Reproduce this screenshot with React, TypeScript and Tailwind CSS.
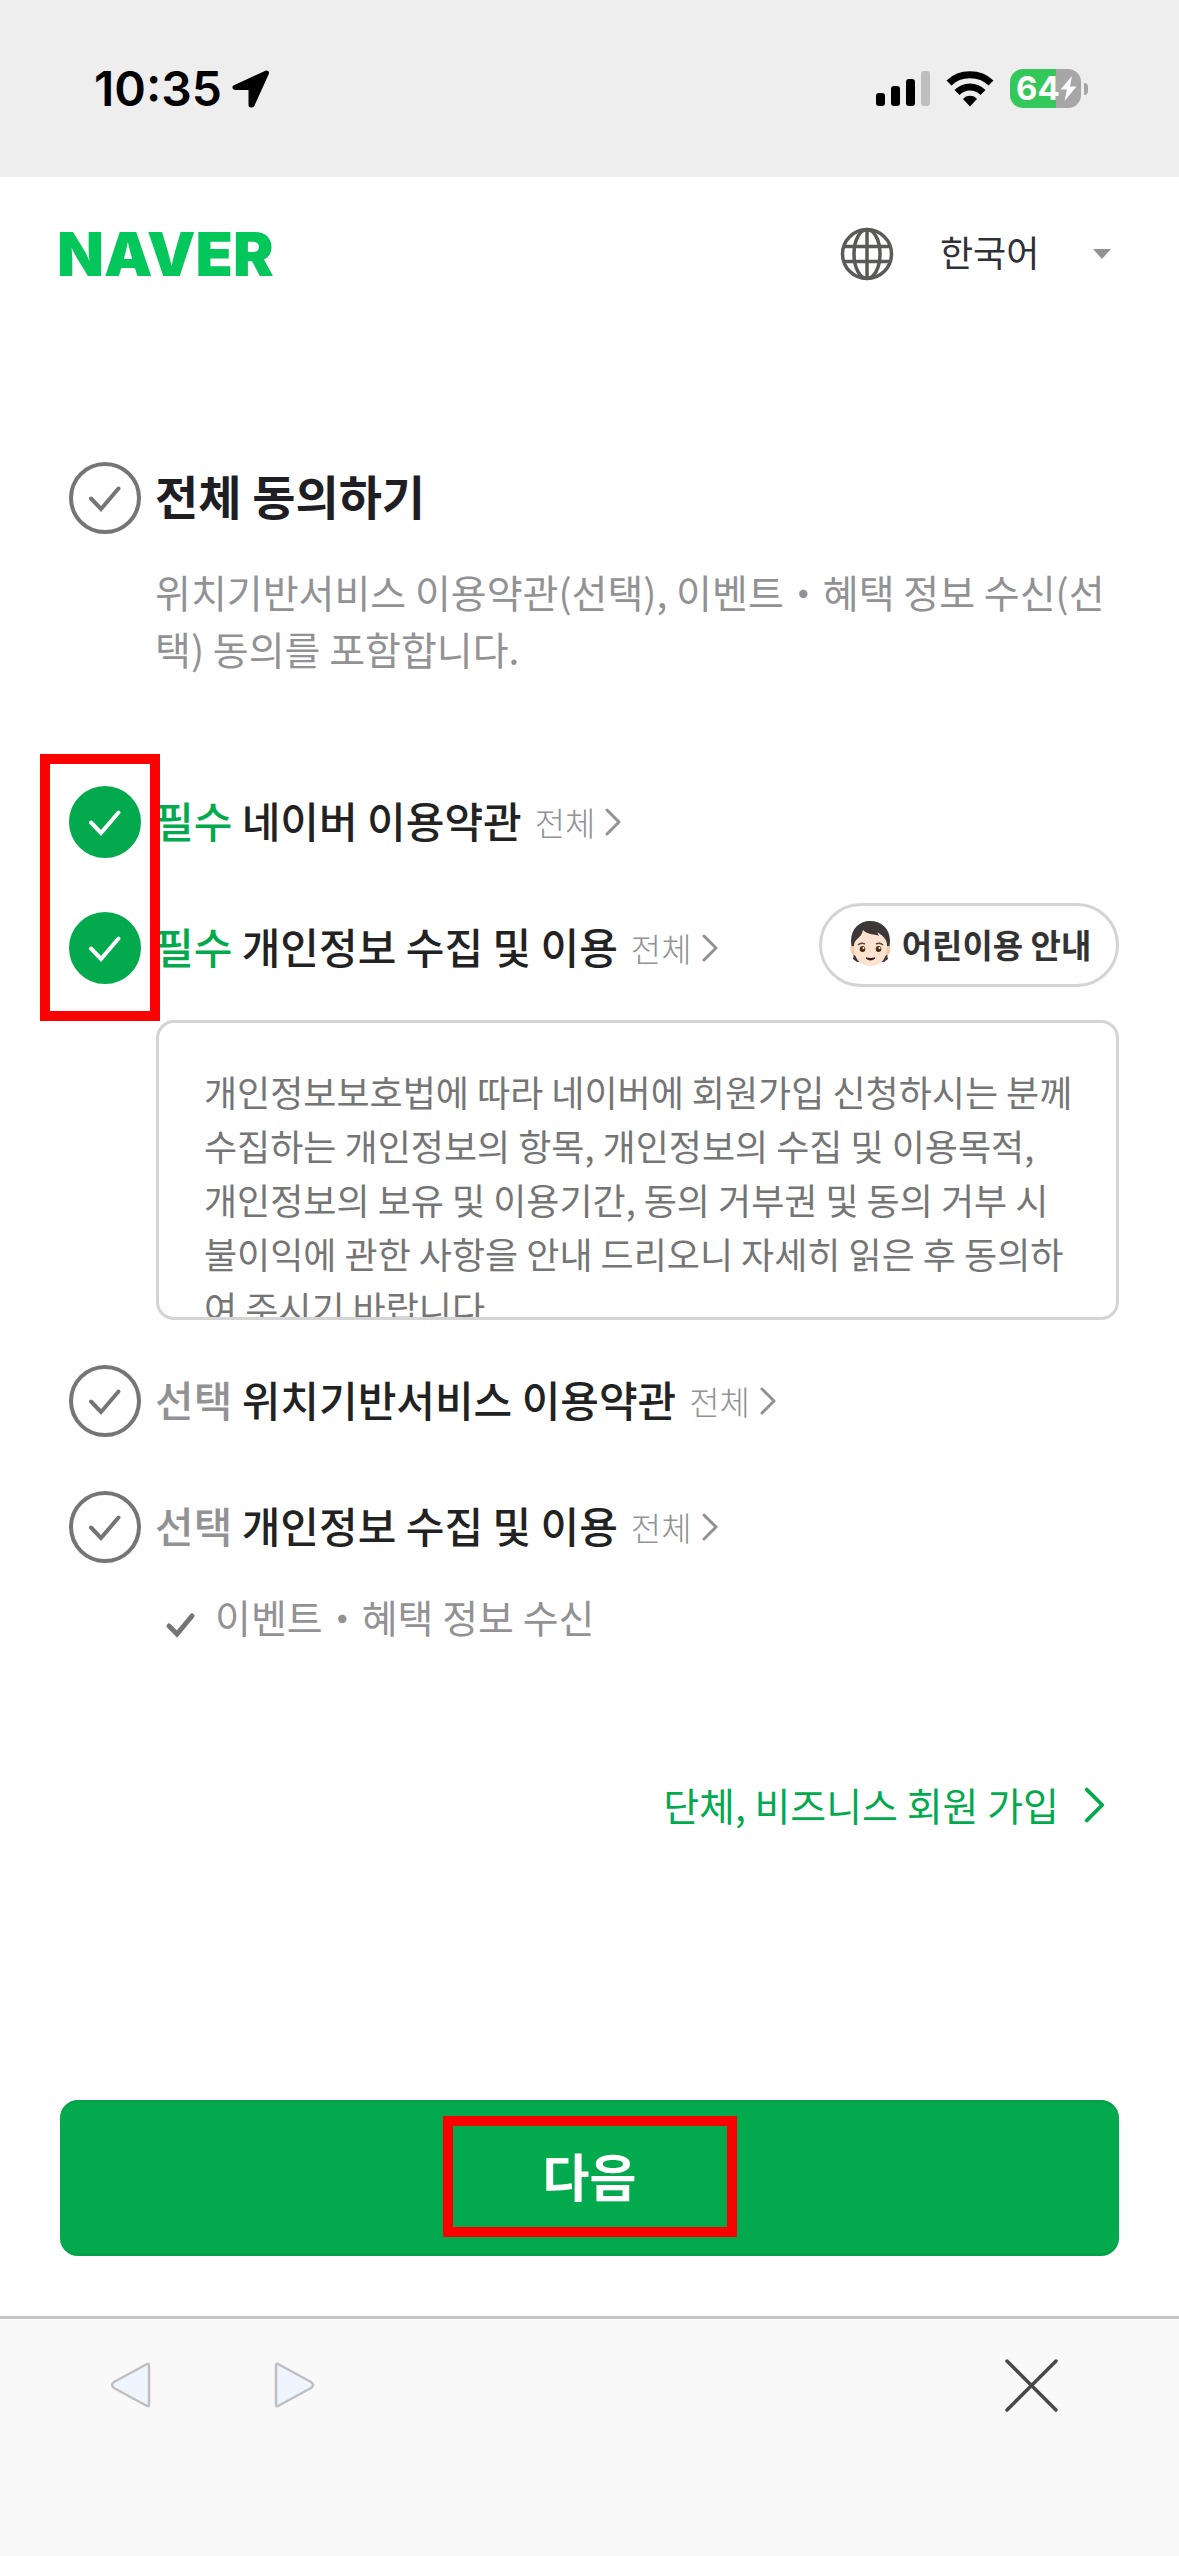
import type { ReactNode } from "react";

const kr = "font-['Noto_Sans_CJK_KR','Noto_Sans',sans-serif]";

function StatusBar() {
  return (
    <header className="flex h-[177px] items-center justify-between bg-[#eeeeee] pr-[91px] pl-[94px] font-['Inter',sans-serif]">
      <div className="flex items-center gap-[10px]">
        <time className="text-[48px] leading-[54px] font-semibold text-black">10:35</time>
        <svg width="38" height="38" viewBox="0 0 38 38" aria-hidden="true">
          <path
            d="M34.5 3 L3 17.5 H19 V35 H20 L34.5 3Z"
            fill="#000"
            stroke="#000"
            strokeWidth="5"
            strokeLinejoin="round"
          />
        </svg>
      </div>
      <div className="flex items-center gap-[16px]">
        <svg width="54" height="35" viewBox="0 0 54 35" aria-hidden="true">
          <rect x="0" y="22" width="9" height="13" rx="3" />
          <rect x="15" y="15" width="9" height="20" rx="3" />
          <rect x="30" y="8" width="9" height="27" rx="3" />
          <rect x="45" y="0" width="9" height="35" rx="3" fill="#bebebe" />
        </svg>
        <svg width="48" height="36" viewBox="0 0 48 36" aria-hidden="true">
          <path d="M3 12 C14 1 34 1 45 12" fill="none" stroke="#000" strokeWidth="7" />
          <path d="M11 21.5 C18 14 30 14 37 21.5" fill="none" stroke="#000" strokeWidth="7" />
          <path d="M24 35.5 L17 28 C20 23.5 28 23.5 31 28Z" />
        </svg>
        <div className="flex items-center gap-[3px]">
          <div className="flex h-[39px] w-[71px] items-center rounded-[13px] bg-[linear-gradient(90deg,#34c759_65%,#a6a6a6_65%)] pl-[6px] text-white">
            <span className="text-[33px] leading-[39px] font-bold">64</span>
            <svg width="17" height="25" viewBox="0 0 17 25" aria-hidden="true">
              <path d="M12 0 L0.5 13.5 H7 L4.5 25 L16.5 10.5 H10Z" fill="#fff" />
            </svg>
          </div>
          <span className="h-[12px] w-[4px] rounded-r-full bg-[#a6a6a6]" />
        </div>
      </div>
    </header>
  );
}

function TopBar() {
  return (
    <div className="flex h-[154px] items-center justify-between pr-[68px] pl-[57px]">
      <a href="#naver" className="font-['Inter',sans-serif] text-[61px] leading-[72px] font-black text-[#03c75a]">
        NAVER
      </a>
      <div className="flex items-center">
        <svg width="54" height="54" viewBox="0 0 54 54" fill="none" stroke="#5a5a57" strokeWidth="3.5" aria-hidden="true">
          <circle cx="27" cy="27" r="24.5" />
          <ellipse cx="27" cy="27" rx="13" ry="24.5" />
          <path d="M27 2.5 V51.5 M4 19.5 H50 M4 34.5 H50" />
        </svg>
        <div className="relative flex items-center">
          <select
            aria-label="언어"
            className="h-[60px] w-[217px] appearance-none bg-transparent pb-[6px] pl-[46px] text-[36px] leading-[54px] text-[#303038]"
          >
            <option>한국어</option>
          </select>
          <svg className="pointer-events-none absolute right-0" width="18" height="10" viewBox="0 0 18 10" aria-hidden="true">
            <path d="M0 0 H18 L9 10Z" fill="#929294" />
          </svg>
        </div>
      </div>
    </div>
  );
}

function CheckCircle({ id, checked = false }: { id: string; checked?: boolean }) {
  return (
    <span className="relative flex size-[72px] shrink-0">
      <input id={id} type="checkbox" defaultChecked={checked} className="peer absolute inset-0 size-full appearance-none" />
      <svg
        className="pointer-events-none size-full fill-none stroke-[#757575] peer-checked:fill-[#03aa4d] peer-checked:stroke-[#03aa4d]"
        viewBox="0 0 72 72"
        aria-hidden="true"
      >
        <circle cx="36" cy="36" r="34" strokeWidth="4" />
        <path
          d="M22 36.5 L32 47 L49.5 26.5"
          fill="none"
          stroke={checked ? "#ffffff" : "#757575"}
          strokeWidth="4"
          strokeLinecap="round"
        />
      </svg>
    </span>
  );
}

function Chevron({ className }: { className: string }) {
  return (
    <svg className={className} viewBox="0 0 16 28" fill="none" stroke="currentColor" strokeWidth="3" aria-hidden="true">
      <path d="M2 2 L14 14 L2 26" strokeLinecap="round" strokeLinejoin="round" />
    </svg>
  );
}

function Term({
  id,
  kind,
  title,
  checked,
  children,
}: {
  id: string;
  kind: "필수" | "선택";
  title: string;
  checked?: boolean;
  children?: ReactNode;
}) {
  const kindColor = kind === "필수" ? "text-[#03aa4d]" : "text-[#929294]";
  return (
    <div className="flex h-[84px] items-center">
      <CheckCircle id={id} checked={checked} />
      <label htmlFor={id} className="ml-[14px] pb-1 text-[42px] leading-[60px] font-medium whitespace-nowrap text-[#222222]">
        <span className={kindColor}>{kind}</span> {title}
      </label>
      <a href={`#${id}`} className="ml-[13px] flex items-center gap-[10px] text-[33px] leading-[46px] font-light whitespace-nowrap text-[#929294]">
        전체
        <Chevron className="h-[28px] w-[16px]" />
      </a>
      {children}
    </div>
  );
}

function ChildFace() {
  return (
    <svg width="42" height="46" viewBox="0 0 42 46" aria-hidden="true">
      <path
        d="M3 38 C5 33 1 28 1 20 C1 7 10 0 20 0 C31 0 40 7 40 20 C40 28 36 33 38 38 L34 41 H7Z"
        fill="#3d3738"
      />
      <path d="M2 25 Q-1 28 2 33 L6 35 V25Z" fill="#f5cba8" />
      <path d="M39 25 Q42 28 39 33 L35 35 V25Z" fill="#f5cba8" />
      <path
        d="M4 24 C5 17 11 18 13 9 C17 14 26 13 29 15 C28 13 28 12 27 11 C32 14 37 18 37 24 C38 37 31 45 20.500 45 C10 45 3 37 4 24Z"
        fill="#fce3d0"
      />
      <path d="M8 24 Q11 21 15 23 M26 23 Q30 21 33 24" fill="none" stroke="#5a4a42" strokeWidth="1.5" />
      <ellipse cx="12.500" cy="28" rx="2.800" ry="3" fill="#4a3010" />
      <ellipse cx="28.500" cy="28" rx="2.800" ry="3" fill="#4a3010" />
      <circle cx="13.500" cy="27" r="1" fill="#ffffff" />
      <circle cx="29.500" cy="27" r="1" fill="#ffffff" />
      <path d="M16 37 Q20.500 38 25 37 Q20.500 41 16 37Z" fill="#2a1414" stroke="#2a1414" strokeWidth="1" />
    </svg>
  );
}

export default function App() {
  return (
    <div className={`flex min-h-screen flex-col bg-white ${kr}`}>
      <StatusBar />
      <TopBar />

      <main className="flex flex-1 flex-col px-[60px] pt-[125px]">
        <form className="pl-[9px]">
          <section className="pb-[103px]">
            <div className="flex h-[84px] items-center">
              <CheckCircle id="all" />
              <label htmlFor="all" className="ml-[14px] pb-2 text-[47px] leading-[69px] font-bold text-[#1e1e23]">
                전체 동의하기
              </label>
            </div>
            <p className="mt-[23px] ml-[86px] text-[39px] leading-[57px] text-[#929294]">
              위치기반서비스 이용약관(선택), 이벤트・혜택 정보 수신(선
              <br />
              택) 동의를 포함합니다.
            </p>
          </section>

          <section>
            <div className="relative flex flex-col gap-[42px]">
              <Term id="service" kind="필수" title="네이버 이용약관" checked />
              <Term id="privacy" kind="필수" title="개인정보 수집 및 이용" checked>
                <button
                  type="button"
                  className="mb-[6px] ml-auto flex h-[84px] w-[300px] items-center justify-center gap-[10px] rounded-full border-[3px] border-[#d4d4d4] pb-[2px] pl-[3px] text-[33px] leading-[48px] font-bold whitespace-nowrap text-[#333333]"
                >
                  <ChildFace />
                  어린이용 안내
                </button>
              </Term>
              <div className="pointer-events-none absolute -top-[26px] -left-[29px] h-[267px] w-[120px] border-[10px] border-[#ff0000]" />
            </div>
            <div className="mt-[30px] ml-[87px] h-[300px] overflow-hidden rounded-[18px] border-[3px] border-[#d4d4d4] px-[45px] pt-[41px] text-[36px] leading-[54px] whitespace-nowrap text-[#757575]">
              개인정보보호법에 따라 네이버에 회원가입 신청하시는 분께
              <br />
              수집하는 개인정보의 항목, 개인정보의 수집 및 이용목적,
              <br />
              개인정보의 보유 및 이용기간, 동의 거부권 및 동의 거부 시
              <br />
              불이익에 관한 사항을 안내 드리오니 자세히 읽은 후 동의하
              <br />여 주시기 바랍니다.
            </div>
            <div className="mt-[39px] flex flex-col gap-[42px]">
              <Term id="location" kind="선택" title="위치기반서비스 이용약관" />
              <Term id="marketing" kind="선택" title="개인정보 수집 및 이용" />
            </div>
            <label className="mt-[19px] ml-[96px] flex items-center gap-[19px] text-[39px] leading-[57px] text-[#929294]">
              <input type="checkbox" className="peer sr-only" />
              <svg className="mt-4" width="31" height="26" viewBox="0 0 31 26" fill="none" aria-hidden="true">
                <path d="M4 14 L12 22 L27 4" stroke="#757575" strokeWidth="5" strokeLinecap="round" />
              </svg>
              이벤트・혜택 정보 수신
            </label>
          </section>
        </form>

        <a
          href="#business"
          className="mt-[131px] mr-[14px] flex items-center gap-[25px] self-end text-[39px] leading-[57px] text-[#03aa4d]"
        >
          단체, 비즈니스 회원 가입
          <Chevron className="h-[36px] w-[21px]" />
        </a>

        <button
          type="button"
          className="mt-auto mb-[60px] flex h-[156px] w-full items-start justify-center rounded-[18px] border-y-[3px] border-[#03a149] bg-[#03aa4d] pt-[13px] text-[51px] leading-[72px] font-bold text-white"
        >
          <span className="flex h-[121px] w-[294px] items-center justify-center border-[10px] border-[#ff0000] pb-1">
            다음
          </span>
        </button>
      </main>

      <footer className="flex h-[240px] items-start justify-between border-t-[3px] border-[#c6c6c6] bg-[#f9f9f9] pt-[40px] pr-[121px] pl-[110px]">
        <nav className="flex gap-[123px]">
          <button type="button" aria-label="뒤로" className="pt-[2px]">
            <svg width="41" height="48" viewBox="0 0 41 48" aria-hidden="true">
              <path d="M37 3 Q39 2 39 5 V43 Q39 46 37 45 L4 27 Q0 24 4 21Z" fill="#eff5ff" stroke="#bfbfbf" strokeWidth="2.5" />
            </svg>
          </button>
          <button type="button" aria-label="앞으로" className="pt-[2px]">
            <svg width="41" height="48" viewBox="0 0 41 48" aria-hidden="true">
              <path d="M4 3 Q2 2 2 5 V43 Q2 46 4 45 L37 27 Q41 24 37 21Z" fill="#eff5ff" stroke="#bfbfbf" strokeWidth="2.5" />
            </svg>
          </button>
        </nav>
        <button type="button" aria-label="닫기">
          <svg width="53" height="53" viewBox="0 0 53 53" aria-hidden="true">
            <path d="M2 2 L51 51 M51 2 L2 51" stroke="#484848" strokeWidth="3.5" strokeLinecap="round" />
          </svg>
        </button>
      </footer>
    </div>
  );
}
